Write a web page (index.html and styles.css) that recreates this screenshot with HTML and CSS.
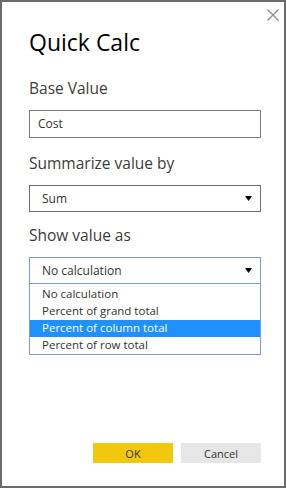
FILE: index.html
```html
<!DOCTYPE html>
<html lang="en">
<head>
  <meta charset="UTF-8" />
  <meta name="viewport" content="width=device-width, initial-scale=1.0"/>
  <title>Quick Calc</title>
  <link rel="stylesheet" href="styles.css">
</head>
<body>
  <div class="dialog">
    <button class="close-btn" aria-label="Close">
      <svg width="12" height="12" viewBox="0 0 12 12"><path d="M0.5 0.5 L11.5 11.5 M11.5 0.5 L0.5 11.5" stroke="#8a8a8a" stroke-width="1.3" fill="none"/></svg>
    </button>

    <h1>Quick Calc</h1>

    <label class="field-label">Base Value</label>
    <div class="text-box">Cost</div>

    <label class="field-label">Summarize value by</label>
    <div class="select-box">
      <span>Sum</span>
      <svg class="arrow" width="7" height="5" viewBox="0 0 7 5"><path d="M0 0 H7 L3.5 5 Z" fill="#000"/></svg>
    </div>

    <label class="field-label">Show value as</label>
    <div class="select-box open">
      <span>No calculation</span>
      <svg class="arrow" width="7" height="5" viewBox="0 0 7 5"><path d="M0 0 H7 L3.5 5 Z" fill="#000"/></svg>
    </div>
    <ul class="options">
      <li>No calculation</li>
      <li>Percent of grand total</li>
      <li class="selected">Percent of column total</li>
      <li>Percent of row total</li>
    </ul>

    <div class="footer">
      <button class="ok-btn">OK</button>
      <button class="cancel-btn">Cancel</button>
    </div>
  </div>
</body>
</html>
```
FILE: styles.css
```css
body {
  margin: 0;
  font-family: "Segoe UI", "Open Sans", sans-serif;
  background: #fff;
}
.dialog {
  position: relative;
  box-sizing: border-box;
  width: 286px;
  height: 488px;
  border: 2px solid #6b6b6b;
  padding: 0 23px 23px 27px;
  display: flex;
  flex-direction: column;
}
.close-btn {
  position: absolute;
  top: 7px;
  right: 5px;
  border: none;
  background: none;
  padding: 0;
  width: 12px;
  height: 12px;
}
.close-btn svg {
  display: block;
}
h1 {
  font-size: 23px;
  font-weight: normal;
  line-height: 30px;
  color: #000;
  margin: 25px 0 0 0;
}
.field-label {
  display: block;
  font-size: 15.5px;
  line-height: 20px;
  color: #3c3c3c;
  margin-top: 21px;
  margin-bottom: 12px;
}
.text-box {
  box-sizing: border-box;
  height: 28px;
  border: 1px solid #7a7a7a;
  padding-left: 8px;
  font-size: 12px;
  line-height: 26px;
  color: #333;
}
.text-box + .field-label {
  margin-top: 15px;
}
.select-box {
  box-sizing: border-box;
  height: 27px;
  border: 1px solid #6e6e6e;
  padding: 0 8px 0 12px;
  font-size: 12px;
  line-height: 25px;
  color: #333;
  display: flex;
  justify-content: space-between;
  align-items: center;
}
.select-box + .field-label {
  margin-top: 13px;
}
.select-box.open {
  border-color: #7b9bd1;
}
.arrow {
  display: block;
}
.options {
  list-style: none;
  margin: 0;
  padding: 2px 0 0 0;
  border: 1px solid #7b9bd1;
  border-top: none;
}
.options li {
  height: 17px;
  line-height: 16px;
  padding-left: 12px;
  font-size: 11.5px;
  color: #333;
}
.options li.selected {
  background: #1e90ff;
  color: #fff;
}
.footer {
  margin-top: auto;
  display: flex;
  justify-content: flex-end;
  gap: 8px;
}
.footer button {
  width: 80px;
  height: 20px;
  border: none;
  padding: 0;
  font-family: inherit;
  font-size: 11px;
  color: #333;
  cursor: pointer;
}
.ok-btn { background-color: #f2c80f; }
.cancel-btn { background-color: #e6e6e6; }
```
